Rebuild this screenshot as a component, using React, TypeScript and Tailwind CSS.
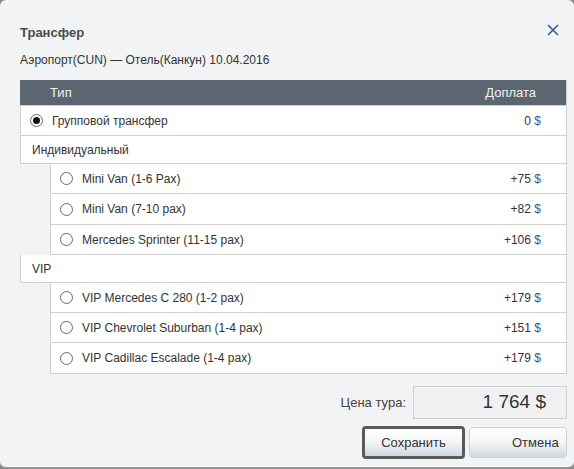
import React from "react";

const font = { fontFamily: '"Liberation Sans", Arial, sans-serif' };

function Radio({ checked }: { checked?: boolean }) {
  return (
    <span className="w-[13px] h-[13px] rounded-full border border-[#6b6b6b] bg-white flex items-center justify-center shrink-0">
      {checked && <span className="w-[7px] h-[7px] rounded-full bg-[#111]" />}
    </span>
  );
}

function Price({ v }: { v: string }) {
  return (
    <span className="text-[#333]">
      {v} <span className="text-[#2b5c9e]">$</span>
    </span>
  );
}

function SubRow({ label, price, tall }: { label: string; price: string; tall?: boolean }) {
  return (
    <div
      className={
        tall
          ? "ml-[30px] h-[31px] bg-white border-l border-b border-[#d0d0d0] flex items-center pl-[9px] pr-[25px]"
          : "ml-[30px] h-[30px] bg-white border-l border-b border-[#d0d0d0] flex items-center pl-[9px] pr-[25px]"
      }
    >
      <Radio />
      <span className="ml-[9px] text-[#333] flex-1">{label}</span>
      <Price v={price} />
    </div>
  );
}

function GroupRow({ label }: { label: string }) {
  return (
    <div className="h-[28px] bg-white border-l border-b border-[#d0d0d0] flex items-center pl-[11px] text-[#333]">
      {label}
    </div>
  );
}

export default function App() {
  return (
    <div className="w-[574px] h-[469px] bg-[#8a8a8a] overflow-hidden" style={font}>
      <div className="h-[468px] bg-[#f2f3f5] rounded-[6px] border-b border-[#9a9a9a] text-[12px]">
        <div className="flex items-center justify-between pl-[20px] pr-[15px] pt-[24px] h-[42px]">
          <span className="font-bold text-[13px] text-[#4a4a4a]">Трансфер</span>
          <svg width="12" height="12" viewBox="0 0 12 12" className="mt-[-6px]">
            <path d="M1 1 L11 11 M11 1 L1 11" stroke="#2d5e9c" strokeWidth="1.6" />
          </svg>
        </div>
        <div className="pl-[20px] h-[38px] flex items-center text-[#333] pb-[2px]">
          Аэропорт(CUN) — Отель(Канкун) 10.04.2016
        </div>
        <div className="ml-[20px] w-[547px] border-r border-[#d0d0d0]">
          <div className="h-[26px] bg-[#5c6670] flex items-center justify-between pl-[30px] pr-[30px] text-[13px] text-[#f2f2f2] border-b border-[#d0d0d0]">
            <span>Тип</span>
            <span>Доплата</span>
          </div>
          <div className="h-[30px] bg-white border-l border-b border-[#d0d0d0] flex items-center pl-[9px] pr-[25px]">
            <Radio checked />
            <span className="ml-[9px] text-[#333] flex-1">Групповой трансфер</span>
            <Price v="0" />
          </div>
          <GroupRow label="Индивидуальный" />
          <SubRow label="Mini Van (1-6 Pax)" price="+75" />
          <SubRow label="Mini Van (7-10 pax)" price="+82" tall />
          <SubRow label="Mercedes Sprinter (11-15 pax)" price="+106" />
          <GroupRow label="VIP" />
          <SubRow label="VIP Mercedes C 280 (1-2 pax)" price="+179" />
          <SubRow label="VIP Chevrolet Suburban (1-4 pax)" price="+151" />
          <SubRow label="VIP Cadillac Escalade (1-4 pax)" price="+179" tall />
        </div>
        <div className="flex justify-end items-center mt-[12px] pr-[7px]">
          <span className="text-[13px] text-[#444] mr-[7px]">Цена тура:</span>
          <div className="w-[154px] h-[33px] bg-[#f0f1f2] border border-[#cfcfcf] flex items-center justify-end pr-[20px] text-[19px] text-[#333]">
            1 764 $
          </div>
        </div>
        <div className="flex justify-end items-center mt-[7px] pr-[7px] gap-[4px]">
          <button className="w-[103px] h-[33px] rounded-[4px] border-[3px] border-[#5a5a5a] bg-gradient-to-b from-[#ffffff] via-[#f3f5f7] to-[#cfd8df] text-[13px] text-[#333]" style={font}>
            Сохранить
          </button>
          <button className="w-[98px] h-[31px] rounded-[4px] border border-[#cdd2d6] bg-gradient-to-b from-[#ffffff] via-[#f3f5f7] to-[#cfd8df] text-[13px] text-[#333] text-left pl-[42px]" style={font}>
            Отмена
          </button>
        </div>
      </div>
    </div>
  );
}
